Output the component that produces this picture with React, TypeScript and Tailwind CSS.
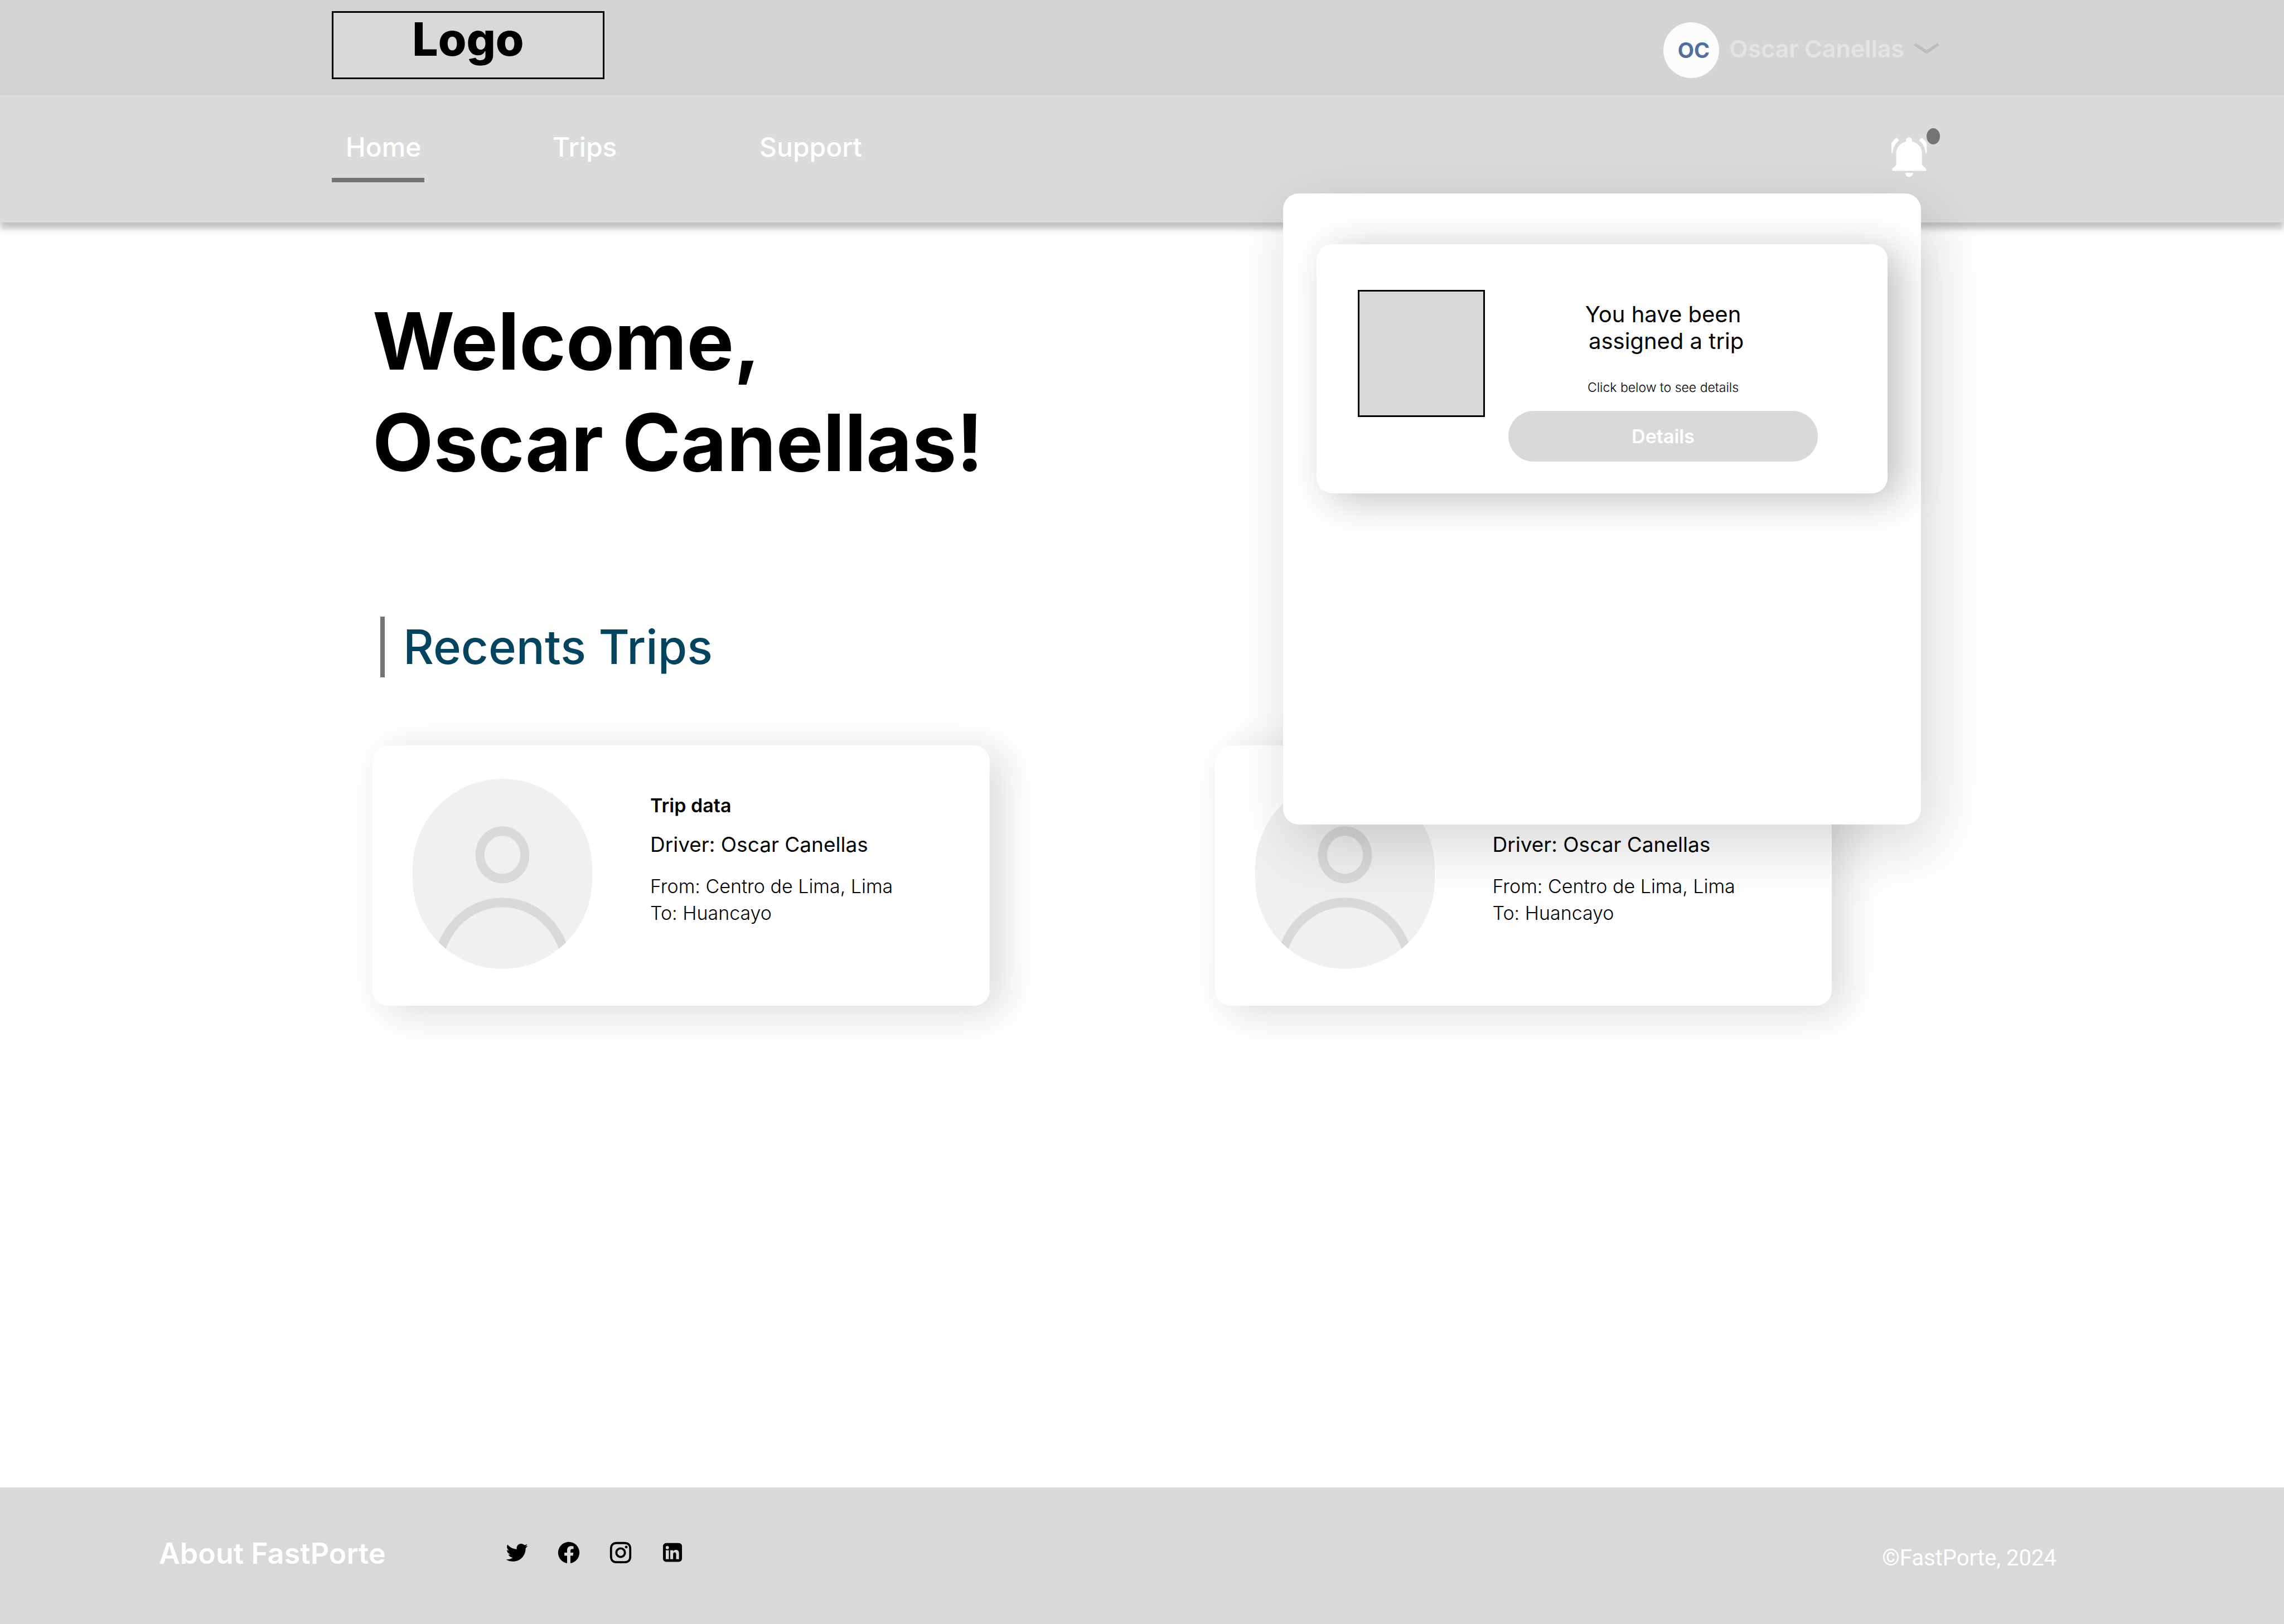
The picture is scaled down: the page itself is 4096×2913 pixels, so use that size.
import React from "react";
import { RiFacebookCircleFill, RiInstagramLine, RiTwitterFill } from "react-icons/ri";

function ChevronIcon() {
  return (
    <svg viewBox="0 0 64 28" className="h-5 w-[46px] fill-[#bdbdbd]" aria-hidden="true">
      <path d="M4 0 0 6l32 21.500L64 6l-4-6-28 18z" />
    </svg>
  );
}

function BellIcon() {
  return (
    <svg viewBox="0 0 90 100" className="h-[72px] w-16 fill-white" aria-hidden="true">
      <path d="M12.600.8 19.500 7.100C10 15 4 26 2.900 39.500H0V14.600C3.500 9.300 7.500 4.500 12.600.8z" />
      <path d="M76.400.8 69.500 7.100C79 15 85 26 86.100 39.500H89V14.600C85.500 9.300 81.500 4.500 76.400.8z" />
      <path d="M44.500 0c4.300 0 7.700 3.500 7.700 7.700v2.600C66.500 13.700 77 26 77 40.300v29.300L87.300 79v5.600H1.800V79L12 69.600V40.300C12 26 22.500 13.700 36.800 10.300V7.700C36.800 3.500 40.200 0 44.500 0z" />
      <path d="M34.600 89.400h19.800c0 5.700-4.400 10.300-9.900 10.300s-9.900-4.600-9.900-10.300z" />
    </svg>
  );
}

function LinkedinIcon() {
  return (
    <svg viewBox="0 0 24 24" className="size-[46px]" fill="currentColor" aria-hidden="true">
      <path
        fillRule="evenodd"
        d="M6.100 3h11.800A3 3 0 0 1 20.900 6v11.600a3 3 0 0 1-3 3H6.100a3 3 0 0 1-3-3V6a3 3 0 0 1 3-3zM7.150 5.800a1.500 1.500 0 1 0 0 3 1.500 1.500 0 0 0 0-3zM5.750 9.750v8.350h2.850V9.750zM9.900 9.750v8.350h2.700v-4.300c0-1.100.200-2 1.400-2s1.400.900 1.400 2v4.300h2.700v-4.800c0-2.300-.600-3.900-2.900-3.900-1.200 0-2.100.550-2.600 1.450v-1.100z"
      />
    </svg>
  );
}

function PersonAvatar() {
  return (
    <svg
      viewBox="0 0 20 20"
      preserveAspectRatio="none"
      className="h-[341px] w-[322px] shrink-0 overflow-hidden rounded-full bg-[#f0f0f0]"
      role="img"
      aria-label="Driver"
    >
      <circle cx="10" cy="8" r="2.500" fill="none" stroke="#d9d9d9" />
      <path d="M2.800 20.200a7.200 7.200 0 0 1 14.400 0" fill="none" stroke="#d9d9d9" />
    </svg>
  );
}

function TripCard() {
  return (
    <article className="flex items-start rounded-[28px] bg-white pt-[60px] pb-[66px] pl-[72px] shadow-[23px_11px_71px_rgba(0,0,0,0.15)]">
      <PersonAvatar />
      <div className="ml-[104px] pt-7">
        <h3 className="text-[34px] leading-10 font-semibold">Trip data</h3>
        <p className="mt-[26px] text-[37px] leading-12">Driver: Oscar Canellas</p>
        <p className="mt-[27px] text-[34px] leading-12 font-light">From: Centro de Lima, Lima</p>
        <p className="text-[34px] leading-12 font-light">To: Huancayo</p>
      </div>
    </article>
  );
}

function NotificationPanel() {
  return (
    <section
      aria-label="Notifications"
      className="absolute top-[347px] right-[651px] min-h-[1132px] w-[1144px] rounded-[28px] bg-white px-[60px] pt-[91px] text-black shadow-[17px_34px_108px_rgba(0,0,0,0.17)]"
    >
      <article className="flex items-start rounded-[28px] bg-white pt-[82px] pr-[125px] pb-[57px] pl-[74px] shadow-[23px_11px_71px_rgba(0,0,0,0.25)]">
        <div className="size-[228px] shrink-0 border-3 border-black bg-[#d9d9d9]" />
        <div className="ml-[42px] flex flex-1 flex-col pt-5">
          <p className="text-center text-[40px] leading-12 whitespace-pre">{"You have been\n assigned a trip"}</p>
          <p className="mt-[45px] text-center text-[23px] leading-7 font-light">Click below to see details</p>
          <button type="button" className="mt-7 h-[91px] rounded-full bg-[#d9d9d9] text-[34px] font-semibold text-white">
            Details
          </button>
        </div>
      </article>
    </section>
  );
}

const links = [
  { label: "Home", active: true },
  { label: "Trips", active: false },
  { label: "Support", active: false },
];

function Header() {
  return (
    <header className="relative z-10 bg-[#dbdbdb] shadow-[0_11px_11px_rgba(0,0,0,0.25)]">
      <div className="flex items-end justify-between bg-[#d3d4d6] pt-5 pr-[618px] pb-[29px] pl-[595px]">
        <a
          href="#"
          className="flex h-[122px] w-[489px] items-center justify-center border-3 border-black bg-[#d9d9d9] pb-5 text-[82px] leading-none font-extrabold"
        >
          Logo
        </a>
        <button type="button" className="flex items-center pb-0.5">
          <span className="flex size-[100px] items-center justify-center rounded-full bg-[#fcfcfc] pl-2 text-[38px] font-bold text-[#536d9f]">
            OC
          </span>
          <span className="mb-1.5 ml-[18px] flex items-center gap-[17px] text-[43px] font-semibold text-[#e4e4e4]">
            Oscar Canellas
            <ChevronIcon />
          </span>
        </button>
      </div>
      <div className="flex items-start justify-between pt-[59px] pr-[617px] pb-[72px] pl-[595px]">
        <nav className="mt-1 flex gap-[205px]">
          {links.map((link) => (
            <a
              key={link.label}
              href="#"
              className={
                link.active
                  ? "min-w-[166px] border-b-8 border-[#747474] pr-1 pb-[25px] pl-[25px] text-[48px] leading-[60px] font-medium text-white"
                  : "min-w-[166px] border-b-8 border-transparent pr-1 pb-[25px] pl-[25px] text-[48px] leading-[60px] font-medium text-white"
              }
            >
              {link.label}
            </a>
          ))}
        </nav>
        <button type="button" aria-label="Notifications" className="relative flex h-[88px] w-[87px] items-end">
          <BellIcon />
          <span className="absolute top-0 right-0 h-[29px] w-6 rounded-[50%] bg-[#747474]" />
        </button>
      </div>
      <NotificationPanel />
    </header>
  );
}

function Footer() {
  return (
    <footer className="flex items-center bg-[#d9d9d9] pt-[89px] pr-[408px] pb-[96px] pl-[285px] text-white">
      <h2 className="text-[52px] leading-[60px] font-semibold">About FastPorte</h2>
      <ul className="ml-[212px] flex gap-[47px] pb-1 text-black">
        <li>
          <a href="#" aria-label="Twitter">
            <RiTwitterFill className="size-[46px]" />
          </a>
        </li>
        <li>
          <a href="#" aria-label="Facebook">
            <RiFacebookCircleFill className="size-[46px]" />
          </a>
        </li>
        <li>
          <a href="#" aria-label="Instagram">
            <RiInstagramLine className="size-[46px]" />
          </a>
        </li>
        <li>
          <a href="#" aria-label="LinkedIn">
            <LinkedinIcon />
          </a>
        </li>
      </ul>
      <p className="ml-auto pt-4 font-[Roboto,sans-serif] text-[40px] leading-11">©FastPorte, 2024</p>
    </footer>
  );
}

export default function App() {
  return (
    <div className="flex min-h-screen flex-col bg-white font-[Inter,sans-serif] text-black">
      <Header />
      <main className="flex-1 pt-[121px] pr-[811px] pl-[668px]">
        <h1 className="text-[142px] leading-[182px] font-bold">
          Welcome,
          <br />
          Oscar Canellas!
        </h1>
        <h2 className="mt-[222px] ml-3.5 border-l-8 border-[#747474] pl-[33px] text-[85px] leading-[109px] font-medium text-[#05445e]">
          Recents Trips
        </h2>
        <div className="mt-[122px] grid grid-cols-2 gap-[404px]">
          <TripCard />
          <TripCard />
        </div>
      </main>
      <Footer />
    </div>
  );
}
